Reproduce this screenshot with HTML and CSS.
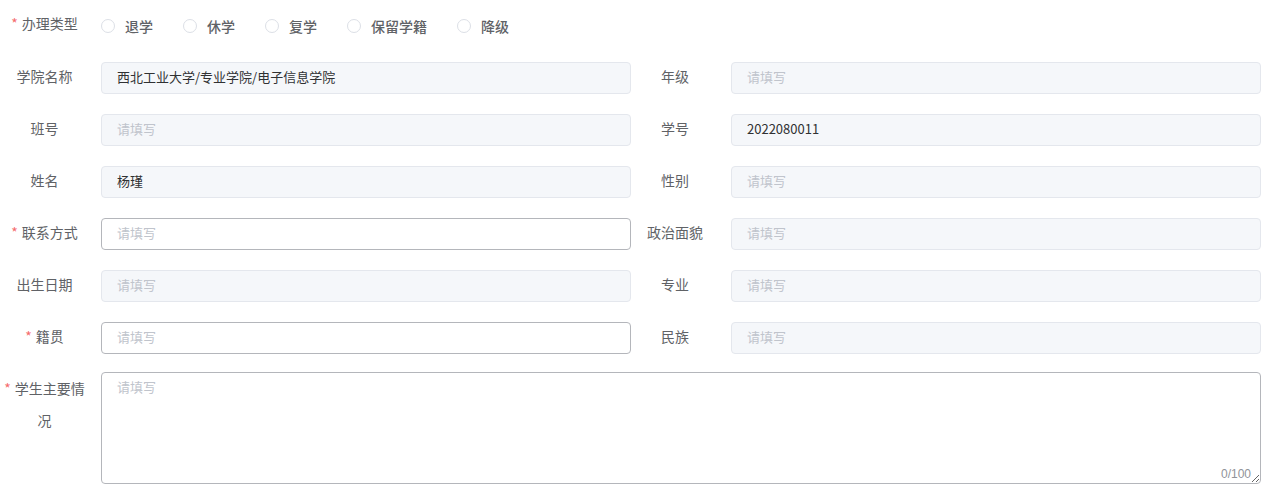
FILE: index.html
```html
<!DOCTYPE html>
<html lang="zh-CN">
<head>
    <meta charset="UTF-8">
    <meta name="viewport" content="width=device-width, initial-scale=1.0">
    <title>学籍异动申请</title>
    <link rel="stylesheet" href="styles.css">
</head>
<body>
    <form class="apply-form">
        <div class="form-item type-row">
            <label class="form-label required">办理类型</label>
            <div class="radio-group">
                <label class="radio"><span class="radio-dot"></span><span class="radio-text">退学</span></label>
                <label class="radio"><span class="radio-dot"></span><span class="radio-text">休学</span></label>
                <label class="radio"><span class="radio-dot"></span><span class="radio-text">复学</span></label>
                <label class="radio"><span class="radio-dot"></span><span class="radio-text">保留学籍</span></label>
                <label class="radio"><span class="radio-dot"></span><span class="radio-text">降级</span></label>
            </div>
        </div>

        <div class="form-grid">
            <div class="form-item">
                <label class="form-label">学院名称</label>
                <input class="input" type="text" value="西北工业大学/专业学院/电子信息学院" disabled>
            </div>
            <div class="form-item">
                <label class="form-label">年级</label>
                <input class="input" type="text" placeholder="请填写" disabled>
            </div>

            <div class="form-item">
                <label class="form-label">班号</label>
                <input class="input" type="text" placeholder="请填写" disabled>
            </div>
            <div class="form-item">
                <label class="form-label">学号</label>
                <input class="input" type="text" value="2022080011" disabled>
            </div>

            <div class="form-item">
                <label class="form-label">姓名</label>
                <input class="input" type="text" value="杨瑾" disabled>
            </div>
            <div class="form-item">
                <label class="form-label">性别</label>
                <input class="input" type="text" placeholder="请填写" disabled>
            </div>

            <div class="form-item">
                <label class="form-label required">联系方式</label>
                <input class="input" type="text" placeholder="请填写">
            </div>
            <div class="form-item">
                <label class="form-label">政治面貌</label>
                <input class="input" type="text" placeholder="请填写" disabled>
            </div>

            <div class="form-item">
                <label class="form-label">出生日期</label>
                <input class="input" type="text" placeholder="请填写" disabled>
            </div>
            <div class="form-item">
                <label class="form-label">专业</label>
                <input class="input" type="text" placeholder="请填写" disabled>
            </div>

            <div class="form-item">
                <label class="form-label required">籍贯</label>
                <input class="input" type="text" placeholder="请填写">
            </div>
            <div class="form-item">
                <label class="form-label">民族</label>
                <input class="input" type="text" placeholder="请填写" disabled>
            </div>

            <div class="form-item wide">
                <label class="form-label required">学生主要情况</label>
                <div class="textarea-wrap">
                    <textarea class="textarea" maxlength="100" placeholder="请填写"></textarea>
                    <span class="word-count">0/100</span>
                </div>
            </div>
        </div>
    </form>
</body>
</html>
```

FILE: styles.css
```css
body {
    margin: 0;
    background: #fff;
    font-family: "Noto Sans CJK SC", "Noto Sans", sans-serif;
    font-size: 14px;
    color: #606266;
}
.apply-form {
    width: 1261px;
    padding-top: 9px;
}
.form-item {
    display: flex;
    align-items: flex-start;
}
.form-label {
    flex: 0 0 101px;
    box-sizing: border-box;
    padding-right: 12px;
    padding-bottom: 4px;
    line-height: 28px;
    text-align: center;
    color: #606266;
}
.wide .form-label {
    line-height: 32px;
    padding-bottom: 0;
}
.form-label.required::before {
    content: "*";
    color: #f56c6c;
    margin-right: 4px;
}
.type-row {
    margin-bottom: 20px;
}
.radio-group {
    display: flex;
    align-items: center;
    height: 32px;
    padding-top: 1px;
}
.radio {
    display: flex;
    align-items: center;
    margin-right: 30px;
    cursor: pointer;
}
.radio-dot {
    width: 14px;
    height: 14px;
    box-sizing: border-box;
    border: 1px solid #dcdfe6;
    border-radius: 50%;
    background: #fff;
}
.radio-text {
    padding-left: 10px;
    font-weight: 500;
    color: #606266;
}
.form-grid {
    display: grid;
    grid-template-columns: 631px 630px;
    row-gap: 20px;
}
.form-grid .form-item:nth-child(2n) .form-label {
    flex-basis: 100px;
}
.input {
    flex: 1;
    min-width: 0;
    height: 32px;
    box-sizing: border-box;
    padding: 0 15px 3px;
    border: 1px solid #b4b6bb;
    border-radius: 4px;
    background: #fff;
    font: inherit;
    font-size: 13px;
    color: #303133;
    outline: none;
}
.input:disabled {
    background: #f5f7fa;
    border-color: #e4e7ed;
    color: #303133;
    -webkit-text-fill-color: #303133;
}
.input::placeholder,
.textarea::placeholder {
    color: #c0c4cc;
    -webkit-text-fill-color: #c0c4cc;
}
.wide {
    grid-column: 1 / -1;
    margin-top: -2px;
}
.wide .form-label {
    flex-basis: 101px !important;
}
.textarea-wrap {
    flex: 1;
    position: relative;
}
.textarea {
    display: block;
    width: 100%;
    height: 112px;
    box-sizing: border-box;
    padding: 4px 15px 5px;
    border: 1px solid #b4b6bb;
    border-radius: 4px;
    font: inherit;
    font-size: 13px;
    line-height: 1.5;
    color: #303133;
    resize: vertical;
    outline: none;
}
.word-count {
    position: absolute;
    right: 10px;
    bottom: 3px;
    font-family: "Liberation Sans", Arial, sans-serif;
    font-size: 12px;
    color: #909399;
}
```
